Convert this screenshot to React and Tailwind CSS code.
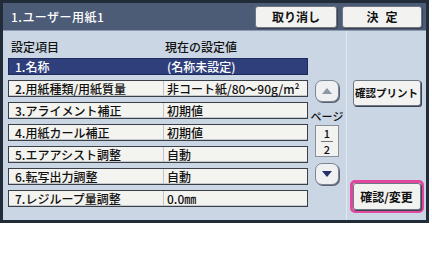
import React from "react";

const rows = [
  { label: "1.名称", value: "(名称未設定)" },
  { label: "2.用紙種類/用紙質量", value: "非コート紙/80～90g/m²" },
  { label: "3.アライメント補正", value: "初期値" },
  { label: "4.用紙カール補正", value: "初期値" },
  { label: "5.エアアシスト調整", value: "自動" },
  { label: "6.転写出力調整", value: "自動" },
  { label: "7.レジループ量調整", value: "0.0㎜" },
];

const font = { fontFamily: '"Noto Sans CJK JP", "Noto Sans", sans-serif' };

function PanelButton({ children, className = "" }) {
  return (
    <div
      className={`flex items-center justify-center whitespace-nowrap rounded-[3px] border border-[#6f7784] bg-[#f2f3f1] shadow-[1px_1px_0_#3c4250] font-bold text-[#111] ${className}`}
    >
      {children}
    </div>
  );
}

function ArrowButton({ up }) {
  return (
    <div className="flex h-[22px] w-[24px] items-center justify-center rounded-[7px] border border-[#7d8593] bg-[#eef0f2] shadow-[1px_1px_0_#5b6270]">
      <svg width="10" height="6" viewBox="0 0 10 6">
        {up ? (
          <polygon points="5,0 10,6 0,6" fill="#8c96a4" />
        ) : (
          <polygon points="0,0 10,0 5,6" fill="#24306a" />
        )}
      </svg>
    </div>
  );
}

export default function App() {
  return (
    <div className="h-[259px] w-[432px] bg-white" style={font}>
      <div className="flex h-[223px] w-[429px] flex-col border-[3px] border-[#222b38] bg-[#cbd6e4]">
        {/* title bar */}
        <div className="flex h-[28px] items-center justify-between border-b border-[#8d9ab0] bg-[#4c5b76] pl-[8px] pr-[4px]">
          <span className="text-[12px] font-medium tracking-[0.04em] text-white">1.ユーザー用紙1</span>
          <div className="flex gap-[5px]">
            <PanelButton className="h-[22px] w-[82px] text-[12px]">取り消し</PanelButton>
            <PanelButton className="h-[22px] w-[80px] pl-[0.6em] text-[12px] tracking-[0.6em]">決定</PanelButton>
          </div>
        </div>

        <div className="flex flex-1">
          {/* table */}
          <div className="flex w-[305px] flex-col pl-[5px] pt-[8px]">
            <div className="flex h-[16px] items-center text-[12px] font-medium text-[#111]">
              <span className="w-[155px] pl-[3px]">設定項目</span>
              <span className="pl-[2px]">現在の設定値</span>
            </div>
            <div className="mt-[3px] flex flex-col gap-[5px]">
              {rows.map((r, i) => (
                <div
                  key={r.label}
                  className={`flex h-[17px] items-center border text-[12px] font-medium ${
                    i === 0
                      ? "border-[#1d2a5c] bg-[#2f3f7c] text-white"
                      : "border-[#3a3f48] bg-[#f3f3ef] text-[#111] shadow-[inset_0_-1px_0_#c6c9cc]"
                  }`}
                >
                  <span
                    className={`flex h-full w-[155px] items-center border-r pl-[6px] ${
                      i === 0 ? "border-[#2f3f7c]" : "border-[#c2c4c6]"
                    }`}
                  >
                    {r.label}
                  </span>
                  <span className="pl-[3px]">{r.value}</span>
                </div>
              ))}
            </div>
          </div>

          {/* pager */}
          <div className="flex w-[38px] flex-col items-center pt-[49px]">
            <ArrowButton up />
            <span className="mt-[8px] text-[11px] font-medium leading-[12px] text-[#111]">ページ</span>
            <div className="mt-[3px] flex h-[32px] w-[24px] flex-col items-center justify-center gap-[1px] border border-[#8a909a] bg-[#f2f3f1] text-[11px] font-medium leading-[13px] text-[#111]">
              <span>1</span>
              <span className="h-px w-[12px] bg-[#777]" />
              <span>2</span>
            </div>
            <div className="mt-[6px]">
              <ArrowButton />
            </div>
          </div>

          {/* side buttons */}
          <div className="flex flex-1 flex-col items-center border-l border-[#e3e9f1] pb-[7px] pt-[49px]">
            <PanelButton className="h-[26px] w-[68px] text-[10.5px]">確認プリント</PanelButton>
            <div className="mt-auto rounded-[5px] border-[3px] border-[#e2479e]">
              <PanelButton className="h-[27px] w-[68px] text-[12px]">確認/変更</PanelButton>
            </div>
          </div>
        </div>
      </div>
    </div>
  );
}
